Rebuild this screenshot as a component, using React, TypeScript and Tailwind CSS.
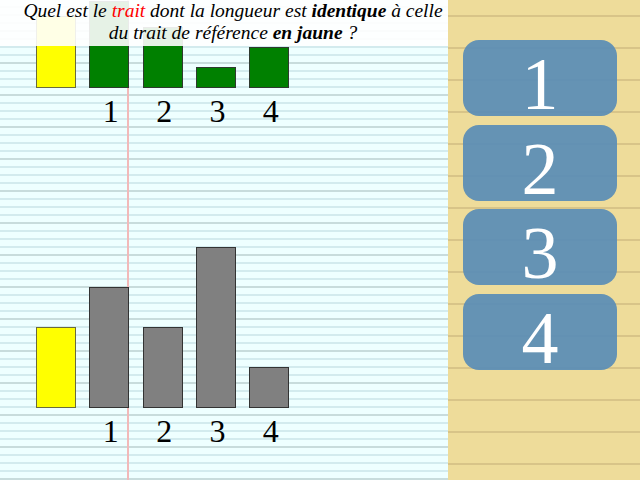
import React from "react";

const serif = "font-['Liberation_Serif',serif]";

type Bar = { h: number; color: string };

const topBars: Bar[] = [
  { h: 71, color: "bg-[#ffff00] border-[#6b6b3a]" },
  { h: 86, color: "bg-[#008000] border-[#2f3a2f]" },
  { h: 60, color: "bg-[#008000] border-[#2f3a2f]" },
  { h: 20, color: "bg-[#008000] border-[#2f3a2f]" },
  { h: 40, color: "bg-[#008000] border-[#2f3a2f]" },
];

const bottomBars: Bar[] = [
  { h: 80, color: "bg-[#ffff00] border-[#6b6b3a]" },
  { h: 120, color: "bg-[#808080] border-[#333]" },
  { h: 80, color: "bg-[#808080] border-[#333]" },
  { h: 160, color: "bg-[#808080] border-[#333]" },
  { h: 40, color: "bg-[#808080] border-[#333]" },
];

const BarRow: React.FC<{ bars: Bar[]; className: string }> = ({ bars, className }) => (
  <div className={`flex items-end gap-[13.33px] ${className}`}>
    {bars.map((b, i) => (
      <div
        key={i}
        className={`relative w-[40px] shrink-0 border ${b.color}`}
        style={{ height: b.h + 1 }}
      />
    ))}
  </div>
);

const Labels: React.FC<{ className?: string }> = ({ className = "" }) => (
  <div className={`flex gap-[13.33px] ${className}`}>
    <div className="w-[40px] shrink-0" />
    {[1, 2, 3, 4].map((n) => (
      <div
        key={n}
        className={`w-[40px] shrink-0 pl-[3px] text-center text-[32px] leading-[32px] text-black ${serif}`}
      >
        {n}
      </div>
    ))}
  </div>
);

export default function App() {
  return (
    <div className="flex w-[640px] h-[480px] overflow-hidden">
      {/* lined paper */}
      <div className="relative w-[448px] h-[480px] shrink-0 bg-[#eeffff] bg-[image:repeating-linear-gradient(180deg,transparent_0px,transparent_30px,#c8dcdc_30px,#c8dcdc_32px),repeating-linear-gradient(180deg,transparent_0px,transparent_6px,#d3ebee_6px,#d3ebee_8px)]">
        <div className="absolute left-[127px] top-0 bottom-0 w-[2px] bg-[#f2b9b9]" />

        <div className="relative flex flex-col pl-[36px]">
          <BarRow bars={topBars} className="h-[88px]" />
          <Labels className="mt-[7px]" />
          <BarRow bars={bottomBars} className="h-[281px]" />
          <Labels className="mt-[7px]" />
        </div>

        {/* question */}
        <div className="absolute top-0 left-0 w-[448px] h-[46px] bg-white/90">
          <div
            className={`w-[466px] text-center text-[19.5px] leading-[22px] italic text-black whitespace-nowrap ${serif}`}
          >
            Quel est le <span className="text-[#ff0000]">trait</span> dont la longueur est{" "}
            <b>identique</b> à celle
            <br />
            du trait de référence <b>en jaune</b> ?
          </div>
        </div>
      </div>

      {/* answers */}
      <div className="relative flex-1 h-[480px] bg-[#eedc9a] bg-[image:repeating-linear-gradient(180deg,transparent_0px,transparent_15px,#d8c488_15px,#d8c488_17px,transparent_17px,transparent_32px)] flex flex-col gap-[8.67px] pt-[40px] pl-[15px]">
        {[1, 2, 3, 4].map((n) => (
          <button
            key={n}
            className={`flex h-[76px] w-[154px] items-center justify-center rounded-[16px] bg-[#5d8eb5]/95 pt-[12px] text-[74px] leading-none text-white ${serif}`}
          >
            {n}
          </button>
        ))}
      </div>
    </div>
  );
}
